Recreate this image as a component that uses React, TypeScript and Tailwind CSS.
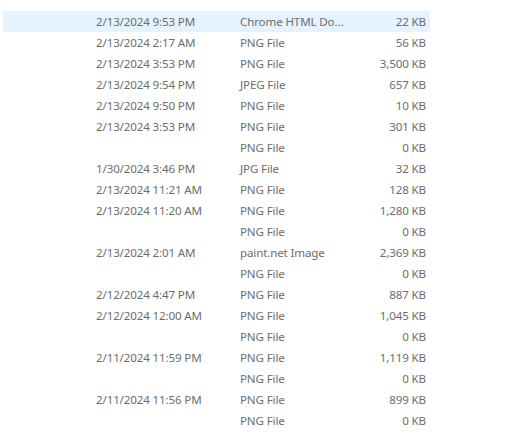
import React from "react";

const rows: [string, string, string][] = [
  ["2/13/2024 9:53 PM", "Chrome HTML Do...", "22 KB"],
  ["2/13/2024 2:17 AM", "PNG File", "56 KB"],
  ["2/13/2024 3:53 PM", "PNG File", "3,500 KB"],
  ["2/13/2024 9:54 PM", "JPEG File", "657 KB"],
  ["2/13/2024 9:50 PM", "PNG File", "10 KB"],
  ["2/13/2024 3:53 PM", "PNG File", "301 KB"],
  ["", "PNG File", "0 KB"],
  ["1/30/2024 3:46 PM", "JPG File", "32 KB"],
  ["2/13/2024 11:21 AM", "PNG File", "128 KB"],
  ["2/13/2024 11:20 AM", "PNG File", "1,280 KB"],
  ["", "PNG File", "0 KB"],
  ["2/13/2024 2:01 AM", "paint.net Image", "2,369 KB"],
  ["", "PNG File", "0 KB"],
  ["2/12/2024 4:47 PM", "PNG File", "887 KB"],
  ["2/12/2024 12:00 AM", "PNG File", "1,045 KB"],
  ["", "PNG File", "0 KB"],
  ["2/11/2024 11:59 PM", "PNG File", "1,119 KB"],
  ["", "PNG File", "0 KB"],
  ["2/11/2024 11:56 PM", "PNG File", "899 KB"],
  ["", "PNG File", "0 KB"],
];

export default function App() {
  return (
    <div
      className="w-[510px] h-[435px] bg-white pt-[11px] overflow-hidden text-[11.6px] tracking-[-0.15px] text-[#6d6d6d]"
      style={{ fontFamily: '"Noto Sans", "Open Sans", sans-serif' }}
    >
      {rows.map((r, i) => (
        <div
          key={i}
          className={
            "ml-[3px] w-[427px] h-[21px] grid grid-cols-[144px_1fr_auto] items-center pl-[93px] pr-[4px] leading-none " +
            (i === 0 ? "bg-[#e5f3ff]" : "")
          }
        >
          <span className="whitespace-nowrap">{r[0]}</span>
          <span className="whitespace-nowrap">{r[1]}</span>
          <span className="whitespace-nowrap text-right">{r[2]}</span>
        </div>
      ))}
    </div>
  );
}
